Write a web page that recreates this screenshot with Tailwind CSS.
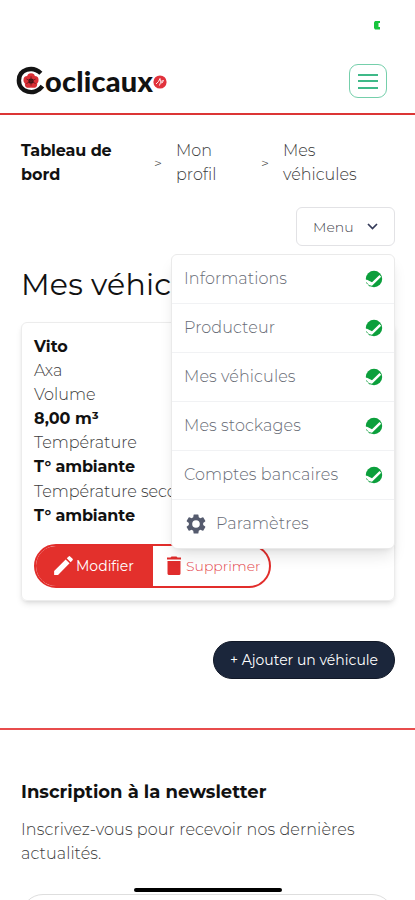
<!DOCTYPE html>
<html lang="fr">
<head>
<meta charset="utf-8">
<meta name="viewport" content="width=device-width, initial-scale=1">
<title>Mes véhicules</title>
<script src="https://cdn.jsdelivr.net/npm/@tailwindcss/browser@4"></script>
</head>
<body class="h-[900px] overflow-hidden bg-white font-['Montserrat','Inter',sans-serif] text-[16px] leading-6 font-light text-[#3c3c3c]">
<svg class="hidden">
  <symbol id="check" viewBox="0 0 18 18">
    <circle cx="9" cy="9" r="8.2" fill="#0c9f3c"/>
    <path d="M-1 9.800 L2 9.800 L7 12.300 L14.500 5 L16.200 6.700 L7 15.800 L-1 14Z" fill="#fff"/>
    <path d="M1.500 12.500 Q3.300 15.600 6 16.600" fill="none" stroke="#0c9f3c" stroke-width="1" stroke-dasharray="2 1"/>
  </symbol>
</svg>
<div class="relative h-[900px] overflow-hidden">
  <header class="flex h-[115px] flex-col border-b-2 border-[#dc3535]">
    <div class="flex h-[49px] justify-end pt-[21px] pr-[35px]">
      <svg class="h-[9px] w-[6px]" viewBox="0 0 6 9"><path d="M1 0H6V2H4.500V6H6V8.500H1L0 7V1.500Z" fill="#16c43c"/></svg>
    </div>
    <div class="flex items-start justify-between pr-[28px] pl-[16px]">
      <div class="flex h-[62px] items-center">
        <svg class="h-[29px] w-[29px] shrink-0" viewBox="0 0 28 28">
          <path d="M24 7 C16 -.500 2.800 3 2.800 14 C2.800 25.500 18 29.500 25.500 19.500" fill="none" stroke="#141414" stroke-width="4.300"/>
          <g fill="#d92f35"><circle cx="14.500" cy="10.900" r="3.800"/><circle cx="18" cy="13.500" r="3.800"/><circle cx="16.700" cy="17.300" r="3.800"/><circle cx="12.300" cy="17.300" r="3.800"/><circle cx="11" cy="13.500" r="3.800"/></g>
          <circle cx="14.500" cy="14.500" r="2.500" fill="#301416"/>
          <path d="M14.500 10V19M10 12.500L19 17M19 12.500L10 17" stroke="#64191c" stroke-width=".8"/>
        </svg>
        <span class="mt-[1px] font-[Lato,sans-serif] text-[29px] leading-7 font-black tracking-[.2px] text-[#111]">oclicaux</span>
        <svg class="mt-[4px] h-[14px] w-[14px] shrink-0" viewBox="0 0 14 14"><circle cx="7" cy="7" r="6.600" fill="#e1323c"/><path d="M3 9L5.500 6.500L7 3.500L7.500 6.500L10.500 5.500L9 8L7.500 7.500L6.500 10.500" fill="none" stroke="#fff" stroke-width=".9"/></svg>
      </div>
      <div class="mt-[15px] flex h-[34px] w-[38px] flex-col items-center justify-center gap-[4.500px] rounded-[9px] border border-[#75cfab]">
        <i class="h-[2px] w-[20px] bg-[#3fb988]"></i><i class="h-[2px] w-[20px] bg-[#3fb988]"></i><i class="h-[2px] w-[20px] bg-[#3fb988]"></i>
      </div>
    </div>
  </header>

  <main class="pr-[20px] pl-[21px]">
    <nav class="flex h-[73px] items-center pt-[23px]">
      <b class="w-[133px] font-bold text-[#111]"><span class="tracking-[-0.1px]">Tableau de</span><br>bord</b>
      <span class="w-[22px] text-[14px]">&gt;</span>
      <span class="w-[85px]">Mon<br>profil</span>
      <span class="w-[22px] text-[14px]">&gt;</span>
      <span>Mes<br>véhicules</span>
    </nav>
    <div class="flex h-[58px] justify-end pt-[19px]">
      <div class="flex h-[39px] w-[99px] items-center gap-[13px] rounded-[6px] border border-[#e2e2e5] pl-[16px] text-[14px] text-[#44444c]">
        <span>Menu</span>
        <svg class="h-[7px] w-[11px]" viewBox="0 0 11 7"><path d="M1 1L5.500 5.500L10 1" fill="none" stroke="#343a58" stroke-width="1.700"/></svg>
      </div>
    </div>
    <h1 class="mt-[19px] h-[40px] text-[30px] leading-[40px] font-normal tracking-[.2px] text-[#111]">Mes véhicules</h1>
    <section class="mt-[17px] h-[279px] rounded-[6px] border border-[#ececec] pt-[12px] pl-[12px] leading-[24.100px] shadow-md">
      <p class="font-bold text-[#111]">Vito</p>
      <p>Axa</p>
      <p>Volume</p>
      <p class="font-bold text-[#111]">8,00 m³</p>
      <p>Température</p>
      <p class="font-bold tracking-[-.1px] text-[#111]">T° ambiante</p>
      <p>Température secondaire</p>
      <p class="font-bold tracking-[-.1px] text-[#111]">T° ambiante</p>
      <div class="mt-[16px] flex h-[44px] w-[237px] overflow-hidden rounded-full border-2 border-[#e22d2b] text-[14px] font-normal">
        <div class="flex w-[117px] items-center bg-[#e3302c] pl-[15px] text-white">
          <svg class="h-[25px] w-[25px]" viewBox="0 0 24 24" fill="currentColor"><path d="M3 17.250V21h3.750L17.810 9.940l-3.750-3.750L3 17.250zM20.710 7.040a1 1 0 0 0 0-1.410l-2.340-2.340a1 1 0 0 0-1.410 0l-1.830 1.830 3.750 3.750 1.830-1.830z"/></svg>
          <span>Modifier</span>
        </div>
        <div class="flex items-center pl-[9px] font-light text-[#e4454b]">
          <svg class="h-[24px] w-[24px]" viewBox="0 0 24 24" fill="#e02c2c"><path d="M5.500 7v12.500c0 1 1 1.500 2 1.500h9c1 0 2-.5 2-1.500V7zM5 3.500h3.500l1-1h5l1 1H19v2H5z"/></svg>
          <span>Supprimer</span>
        </div>
      </div>
    </section>
    <div class="mt-[40px] flex justify-end">
      <div class="flex h-[38px] w-[182px] items-center justify-center rounded-full border border-[#111827] bg-[#1b263b] text-[14px] font-normal text-white">+ Ajouter un véhicule</div>
    </div>
  </main>

  <footer class="mt-[49px] border-t-2 border-[#e84c4c] px-[21px] pt-[50px]">
    <h2 class="text-[18px] font-bold text-[#111]">Inscription à la newsletter</h2>
    <p class="mt-[14px] tracking-[.1px] leading-[24px]">Inscrivez-vous pour recevoir nos dernières<br>actualités.</p>
    <div class="mt-[28px] h-[44px] rounded-full border border-[#dedede]"></div>
  </footer>

  <div class="absolute top-[254px] left-[171px] h-[295px] w-[224px] rounded-[6px] border border-[#eaeaea] bg-white text-[16px] text-[#686c76] shadow-lg">
    <div class="flex h-full flex-col divide-y divide-[#f1f2f4]">
      <div class="flex flex-1 items-center justify-between pr-[11px] pl-[12px]"><span class="tracking-[.1px]">Informations</span><svg class="h-[18px] w-[18px]"><use href="#check"/></svg></div>
      <div class="flex flex-1 items-center justify-between pr-[11px] pl-[12px]"><span class="tracking-[.1px]">Producteur</span><svg class="h-[18px] w-[18px]"><use href="#check"/></svg></div>
      <div class="flex flex-1 items-center justify-between pr-[11px] pl-[12px]"><span class="tracking-[.1px]">Mes véhicules</span><svg class="h-[18px] w-[18px]"><use href="#check"/></svg></div>
      <div class="flex flex-1 items-center justify-between pr-[11px] pl-[12px]"><span class="tracking-[.1px]">Mes stockages</span><svg class="h-[18px] w-[18px]"><use href="#check"/></svg></div>
      <div class="flex flex-1 items-center justify-between pr-[11px] pl-[12px]"><span class="tracking-[.1px]">Comptes bancaires</span><svg class="h-[18px] w-[18px]"><use href="#check"/></svg></div>
      <div class="flex flex-1 items-center pl-[12px]">
        <svg class="mr-[8px] h-[24px] w-[24px]" viewBox="0 0 24 24" fill="#555b6e"><path d="M19.140 12.940c.04-.3.06-.61.06-.94s-.02-.64-.07-.94l2.030-1.580a.5.5 0 0 0 .12-.61l-1.920-3.320a.49.49 0 0 0-.59-.22l-2.390.96a7 7 0 0 0-1.620-.94l-.36-2.540a.48.48 0 0 0-.48-.41h-3.840a.48.48 0 0 0-.47.41l-.36 2.540c-.59.24-1.130.57-1.620.94l-2.390-.96a.48.48 0 0 0-.59.22L2.740 8.870a.48.48 0 0 0 .12.610l2.030 1.580c-.05.3-.09.63-.09.94s.02.64.07.94l-2.030 1.580a.5.5 0 0 0-.12.610l1.920 3.320c.12.22.37.29.59.22l2.390-.96c.5.38 1.030.7 1.620.94l.36 2.540c.05.24.24.41.48.41h3.840c.24 0 .44-.17.47-.41l.36-2.540c.59-.24 1.130-.56 1.620-.94l2.390.96c.22.08.47 0 .59-.22l1.920-3.320a.48.48 0 0 0-.12-.61zM12 15.800a3.800 3.800 0 1 1 0-7.600 3.800 3.800 0 0 1 0 7.600z"/></svg>
        <span class="tracking-[.1px]">Paramètres</span>
      </div>
    </div>
  </div>
  <div class="absolute top-[888px] left-[134px] h-[4px] w-[148px] rounded-full bg-black"></div>
</div>
</body>
</html>
